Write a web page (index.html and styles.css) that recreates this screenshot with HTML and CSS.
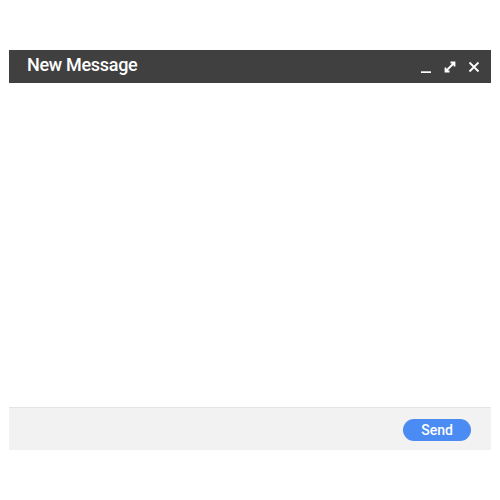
FILE: index.html
```html
<!DOCTYPE html>
<html>
<head>
<meta charset="utf-8">
<link rel="stylesheet" href="styles.css">
</head>
<body>
<div class="compose">
  <div class="titlebar">
    <span class="title">New Message</span>
    <div class="controls">
      <svg class="icon" width="12" height="12" viewBox="0 0 12 12"><path d="M1 11.2H11" stroke="#fff" stroke-width="1.8" fill="none"/></svg>
      <svg class="icon" width="12" height="12" viewBox="0 0 12 12"><path d="M1.5 10.5L10.5 1.5M6.5 1.5H10.5V5.5M1.5 6.5V10.5H5.5" stroke="#fff" stroke-width="1.8" fill="none"/></svg>
      <svg class="icon" width="12" height="12" viewBox="0 0 12 12"><path d="M1.5 1.5L10.5 10.5M10.5 1.5L1.5 10.5" stroke="#fff" stroke-width="1.8" fill="none"/></svg>
    </div>
  </div>
  <div class="content"></div>
  <div class="footer">
    <button class="send">Send</button>
  </div>
</div>
</body>
</html>
```
FILE: styles.css
```css
body {
  margin: 0;
  padding: 50px 9px 0 9px;
  background: #fff;
  font-family: Roboto, "Open Sans", sans-serif;
}
.compose {
  width: 482px;
}
.titlebar {
  height: 33px;
  background: #404040;
  display: flex;
  align-items: center;
  justify-content: space-between;
  padding: 0 11px 0 18px;
}
.title {
  color: #fff;
  font-size: 18px;
  font-weight: 500;
  letter-spacing: -0.3px;
  margin-top: -4px;
}
.controls {
  display: flex;
  gap: 12px;
  align-items: center;
  margin-top: 1px;
}
.icon { display: block; }
.content {
  height: 324px;
  background: #fff;
}
.footer {
  height: 42px;
  background: #f2f2f2;
  border-top: 1px solid #e4e4e4;
  display: flex;
  align-items: center;
  justify-content: flex-end;
  padding-right: 20px;
}
.send {
  width: 68px;
  height: 22px;
  border: none;
  border-radius: 11px;
  background: #4b8bf4;
  color: #fff;
  font-family: Roboto, sans-serif;
  font-size: 14px;
  font-weight: 500;
  padding: 0;
  margin-top: 1px;
}
```
